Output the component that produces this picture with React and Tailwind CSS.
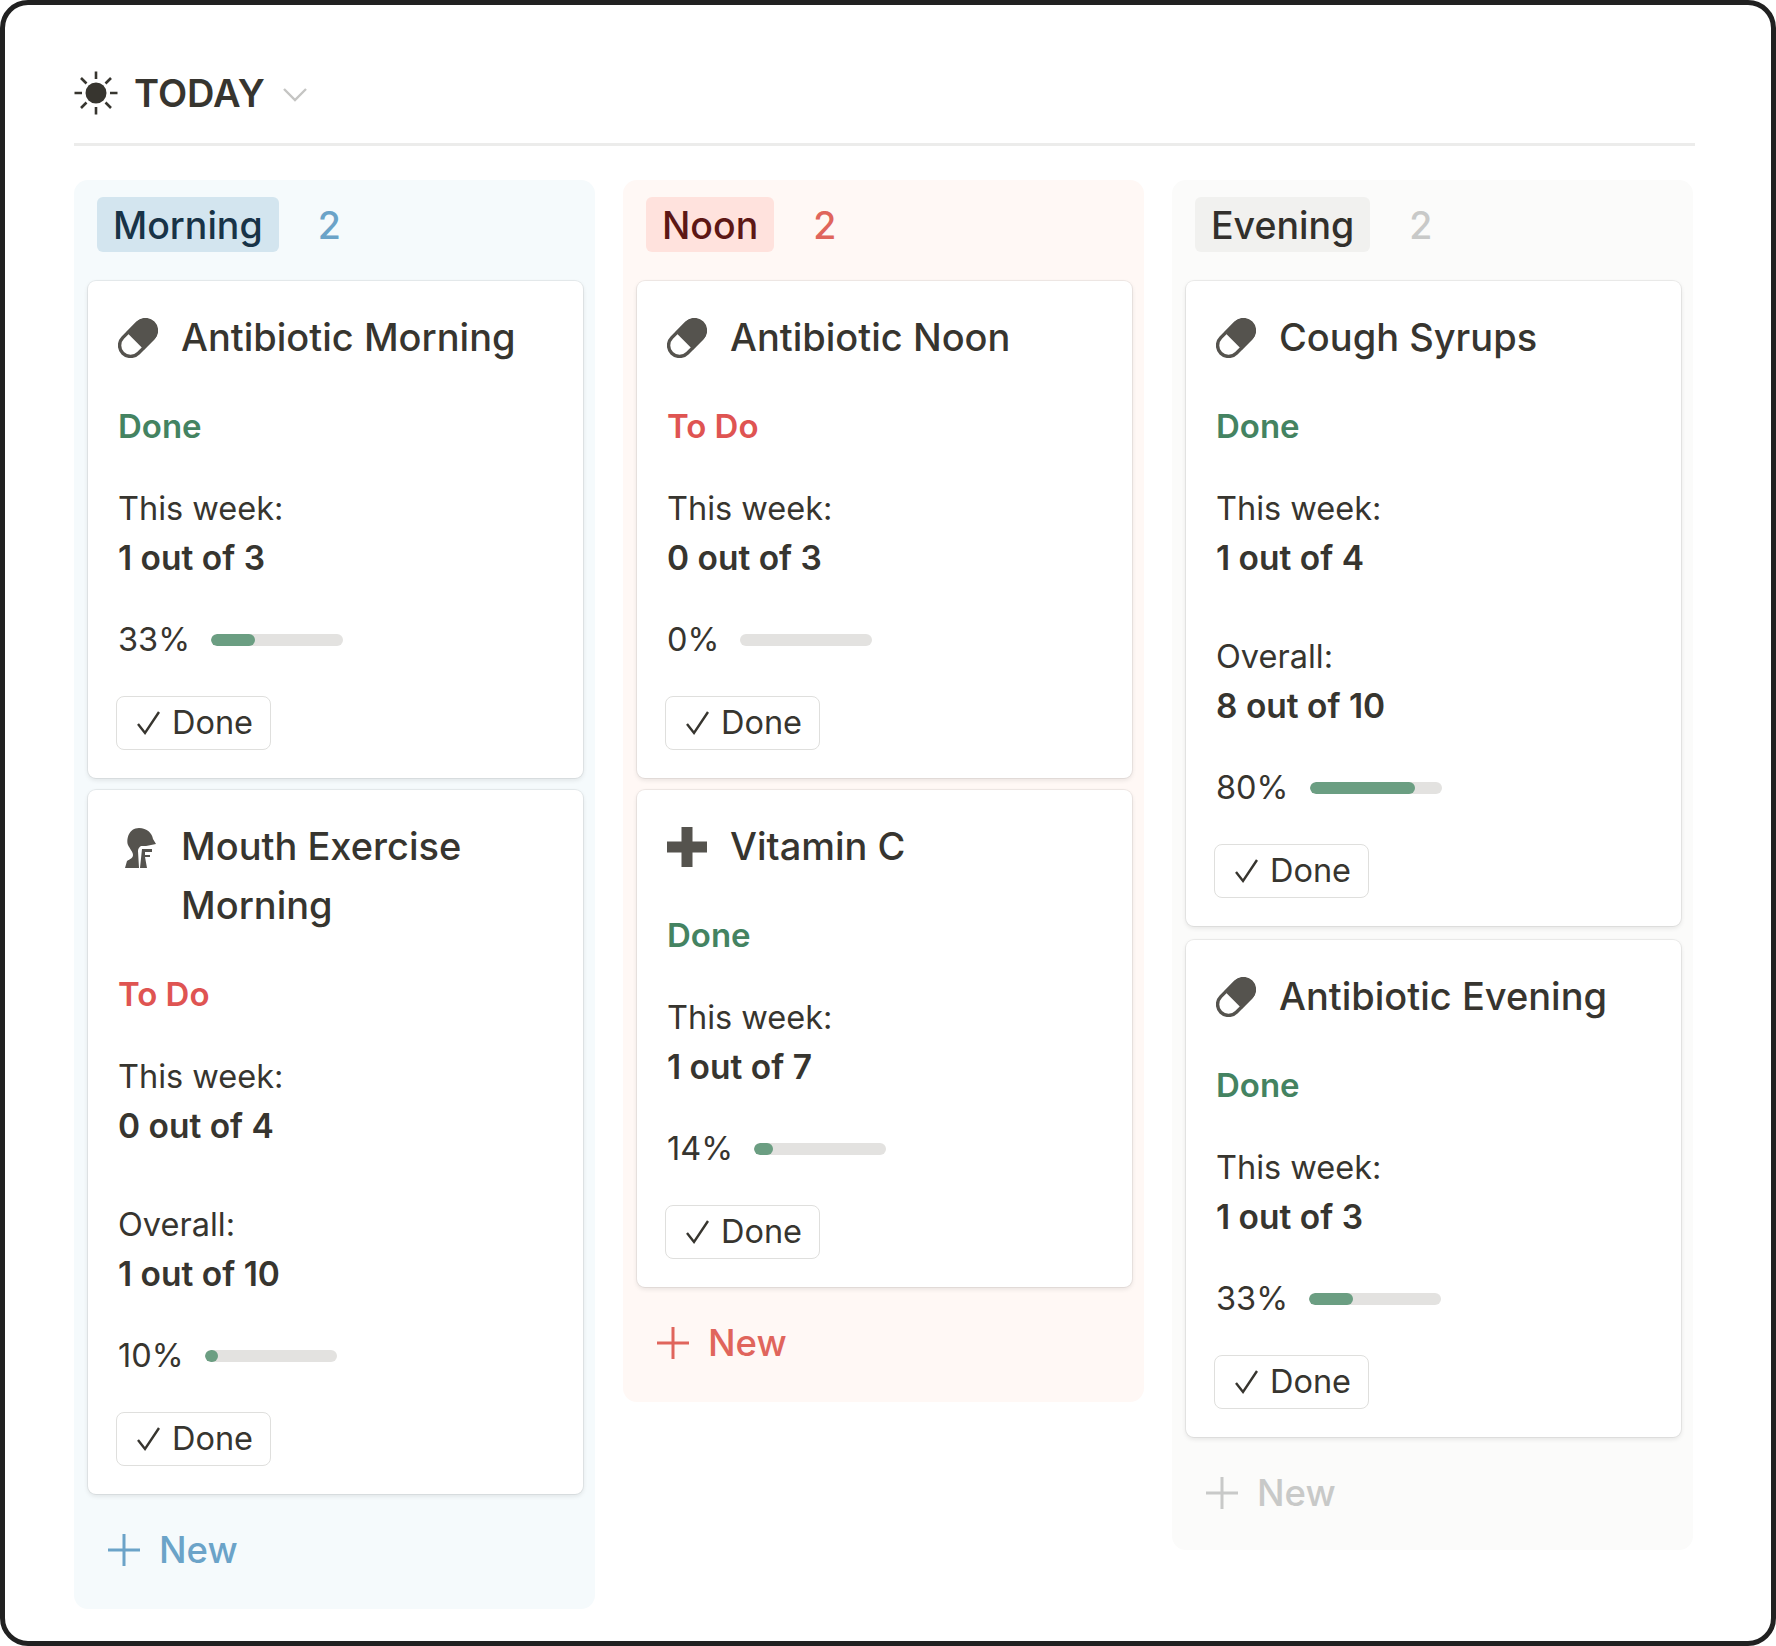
import React from "react";

const themes = {
  blue: {
    col: "bg-[#f5fafc] pb-[35px]",
    pill: "bg-[#d3e5ef] text-[#183347]",
    count: "text-[#6ba3c8]",
    gap: "gap-[12px]",
  },
  red: {
    col: "bg-[#fff8f5] pb-[35px]",
    pill: "bg-[#ffe2dd] text-[#5d1715]",
    count: "text-[#e0655c]",
    gap: "gap-[12px]",
  },
  gray: {
    col: "bg-[#fbfbfa] pb-[33px]",
    pill: "bg-[#f1f1ef] text-[#32302c]",
    count: "text-[#c8c9c8]",
    gap: "gap-[14px]",
  },
};

const SunIcon = () => (
  <svg viewBox="0 0 44 44" className="w-[44px] h-[44px] shrink-0">
    <circle cx="22" cy="22" r="10.5" fill="#37352f" />
    <g stroke="#37352f" strokeWidth="2.6" strokeLinecap="butt">
      <path d="M22 0.5v7.5M22 36v7.5M0.5 22h7.5M36 22h7.5" />
      <path d="M7 7l5.5 5.5M31.5 31.5L37 37M37 7l-5.5 5.5M12.500 31.5L7 37" />
    </g>
  </svg>
);

const PillIcon = () => (
  <svg viewBox="0 0 40 40" className="w-[40px] h-[40px]">
    <g transform="rotate(-45 20 20)">
      <rect x="-1.500" y="9" width="43" height="22" rx="11" fill="#fff" stroke="#55534e" strokeWidth="3.4" />
      <path d="M16 7.500h14a12.500 12.500 0 0 1 0 25H16z" fill="#55534e" />
    </g>
  </svg>
);

const ThroatIcon = () => (
  <svg viewBox="0 0 32 42" className="w-[32px] h-[42px] ml-[6px] mt-[3px]">
    <path
      fill="#55534e"
      d="M15 1C23 1 28 6 29 12L32 17L27 18C24 19 20 19 17 19C15 20 14 22 14 24L15 41H1L3 34C6 32 9 31 9 28C9 25 6 22 4 18C2 12 5 1 15 1z"
    />
    <path fill="#55534e" d="M18 22H28V25H21V28H26V30H21L23 41H16z" />
  </svg>
);

const CrossIcon = () => (
  <svg viewBox="0 0 40 40" className="w-[40px] h-[40px]">
    <path fill="#55534e" d="M14.500 0h11v14.500H40v11H25.500V40h-11V25.500H0v-11h14.500z" />
  </svg>
);

const icons = { pill: PillIcon, throat: ThroatIcon, cross: CrossIcon };

const Progress = ({ value }) => (
  <div className="flex items-center gap-[21px] h-[48px] text-[32.5px] text-[#37352f]">
    <span>{value}%</span>
    <div className="w-[132px] h-[12px] rounded-full bg-[#e3e2e0] overflow-hidden">
      {value > 0 && (
        <div
          className="h-full rounded-full bg-[#6b9e82] min-w-[12px]"
          style={{ width: `${value}%` }}
        />
      )}
    </div>
  </div>
);

const Stat = ({ label, value }) => (
  <div className="text-[32.5px] leading-[48.5px] text-[#37352f]">
    <div>{label}</div>
    <div className="text-[33.5px] font-semibold">{value}</div>
  </div>
);

const Card = ({ icon, title, status, week, overall, percent }) => {
  const Icon = icons[icon];
  return (
    <div className="bg-white rounded-[8px] shadow-[0_0_0_1px_rgba(15,15,15,0.06),0_2px_5px_rgba(15,15,15,0.1)] pt-[27px] pb-[28px] px-[30px]">
      <div className="flex items-start">
        <div className="w-[63px] h-[59px] shrink-0 flex items-center">
          <Icon />
        </div>
        <div className="text-[38px] leading-[59px] font-medium text-[#37352f]">
          {title}
        </div>
      </div>
      <div
        className={`mt-[35px] text-[33px] leading-[48px] font-semibold ${
          status === "Done" ? "text-[#448361]" : "text-[#df5452]"
        }`}
      >
        {status}
      </div>
      <div className="mt-[35px]">
        <Stat label="This week:" value={week} />
      </div>
      {overall && (
        <div className="mt-[51px]">
          <Stat label="Overall:" value={overall} />
        </div>
      )}
      <div className="mt-[34px]">
        <Progress value={percent} />
      </div>
      <div className="mt-[32px] -ml-[2px] w-[155px] h-[54px] rounded-[8px] border border-[#dfdfdd] flex items-center justify-center gap-[12px] text-[32.5px] text-[#37352f]">
        <svg viewBox="0 0 26 26" className="w-[26px] h-[26px]">
          <path d="M4 14l7 9L25 2" fill="none" stroke="#37352f" strokeWidth="2.4" />
        </svg>
        <span>Done</span>
      </div>
    </div>
  );
};

const columns = [
  {
    name: "Morning",
    theme: "blue",
    newColor: "#6ba3c8",
    cards: [
      { icon: "pill", title: "Antibiotic Morning", status: "Done", week: "1 out of 3", percent: 33 },
      { icon: "throat", title: "Mouth Exercise Morning", status: "To Do", week: "0 out of 4", overall: "1 out of 10", percent: 10 },
    ],
  },
  {
    name: "Noon",
    theme: "red",
    newColor: "#e0655c",
    cards: [
      { icon: "pill", title: "Antibiotic Noon", status: "To Do", week: "0 out of 3", percent: 0 },
      { icon: "cross", title: "Vitamin C", status: "Done", week: "1 out of 7", percent: 14 },
    ],
  },
  {
    name: "Evening",
    theme: "gray",
    newColor: "#c8c9c8",
    cards: [
      { icon: "pill", title: "Cough Syrups", status: "Done", week: "1 out of 4", overall: "8 out of 10", percent: 80 },
      { icon: "pill", title: "Antibiotic Evening", status: "Done", week: "1 out of 3", percent: 33 },
    ],
  },
];

const Column = ({ name, theme, newColor, cards }) => {
  const t = themes[theme];
  return (
    <div className={`${t.col} rounded-[14px] pl-[14px] pr-[12px] pt-[16px] self-start`}>
      <div className="flex items-center gap-[39px] pl-[9px] h-[56px] mb-[29px]">
        <div className={`${t.pill} rounded-[6px] h-[55px] px-[16px] pt-[3px] flex items-center text-[37.5px] leading-[50px] font-medium`}>
          {name}
        </div>
        <div className={`${t.count} pt-[3px] text-[37.5px] leading-[50px] font-medium`}>2</div>
      </div>
      <div className={`flex flex-col ${t.gap}`}>
        {cards.map((c) => (
          <Card key={c.title} {...c} />
        ))}
      </div>
      <div className="flex items-center gap-[19px] mt-[32px] pl-[20px] h-[48px] text-[36.5px] font-medium" style={{ color: newColor }}>
        <svg viewBox="0 0 32 32" className="w-[32px] h-[32px]">
          <path d="M16 0v32M0 16h32" stroke={newColor} strokeWidth="3" />
        </svg>
        <span>New</span>
      </div>
    </div>
  );
};

export default function App() {
  return (
    <div className="w-[1776px] h-[1646px] bg-white border-[5px] border-[#212121] rounded-[28px] pt-[58px] pl-[69px] pr-[76px] font-['Inter',sans-serif] overflow-hidden">
      <div className="flex items-center h-[60px] gap-[16px]">
        <SunIcon />
        <span className="text-[38px] font-semibold text-[#37352f]">TODAY</span>
        <svg viewBox="0 0 24 14" className="w-[24px] h-[14px] ml-[2px] mt-[4px]">
          <path d="M1 1l11 11L23 1" fill="none" stroke="#c5c5c3" strokeWidth="2.4" />
        </svg>
      </div>
      <div className="h-[3px] bg-[#ececeb] mt-[20px]" />
      <div className="grid grid-cols-[repeat(3,521px)] gap-[28px] mt-[34px]">
        {columns.map((c) => (
          <Column key={c.name} {...c} />
        ))}
      </div>
    </div>
  );
}
